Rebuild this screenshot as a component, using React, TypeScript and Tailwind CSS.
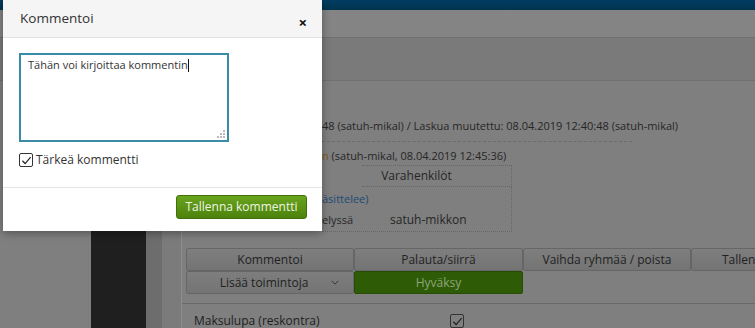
import React from 'react';

const FONT = { fontFamily: '"Open Sans", "Noto Sans", Arial, sans-serif' };

function Check({ className = '' }: { className?: string }) {
  return (
    <span className={`flex items-center justify-center border border-[#333] rounded-[2px] ${className}`}>
      <svg viewBox="0 0 12 12" className="w-[11px] h-[11px]">
        <path d="M1.5 6.3 L4.5 9.3 L10.5 2.2" fill="none" stroke="#222" strokeWidth="1.3" />
      </svg>
    </span>
  );
}

function Modal() {
  return (
    <div className="absolute left-[3px] top-0 w-[319px] h-[231px] bg-white shadow-[0_2px_8px_rgba(0,0,0,0.35)] flex flex-col">
      <div className="h-[38px] bg-[#f5f5f5] border-b border-[#e2e2e2] flex items-center justify-between pl-[17px] pr-[15px]">
        <span className="text-[13.5px] text-[#333] pb-[1px]">Kommentoi</span>
        <span className="text-[15px] font-bold text-[#111] leading-none pt-[7px]">×</span>
      </div>
      <div className="px-[16px] pt-[15px] pb-[18px] border-b border-[#e4e4e4]">
        <div className="relative w-[210px] h-[89px] border-2 border-[#3a8ca6] px-[7px] pt-[2px] text-[11px] text-[#333]">
          <span>Tähän voi kirjoittaa kommentin</span>
          <span className="inline-block w-[1px] h-[13px] bg-[#111] align-middle -mt-[2px]" />
          <svg viewBox="0 0 8 8" className="absolute right-[2px] bottom-[2px] w-[8px] h-[8px]">
            <rect x="6" y="0" width="2" height="2" fill="#bbb" />
            <rect x="3" y="3" width="2" height="2" fill="#bbb" />
            <rect x="6" y="3" width="2" height="2" fill="#bbb" />
            <rect x="0" y="6" width="2" height="2" fill="#bbb" />
            <rect x="3" y="6" width="2" height="2" fill="#bbb" />
            <rect x="6" y="6" width="2" height="2" fill="#bbb" />
          </svg>
        </div>
        <label className="mt-[9px] flex items-center gap-[3px] text-[12px] text-[#333]">
          <Check className="w-[14px] h-[14px] bg-white" />
          <span>Tärkeä kommentti</span>
        </label>
      </div>
      <div className="flex justify-end pr-[15px] pt-[7px]">
        <button className="w-[131px] h-[24px] rounded-[3px] border border-[#41700a] bg-gradient-to-b from-[#69a41d] to-[#4d820d] text-[12px] text-[#eef5e2]">
          Tallenna kommentti
        </button>
      </div>
    </div>
  );
}

function Btn({ children, w, green = false }: { children: React.ReactNode; w: string; green?: boolean }) {
  return (
    <div
      className={`${w} h-[23px] flex items-center justify-center rounded-[2px] border text-[12px] ${
        green
          ? 'bg-[#2e5b05] border-[#274d04] text-[#8fa67c]'
          : 'bg-gradient-to-b from-[#7e7e7e] to-[#747474] border-[#666] text-[#222]'
      }`}
    >
      {children}
    </div>
  );
}

export default function App() {
  return (
    <div className="relative w-[755px] h-[328px] overflow-hidden bg-[#7f7f7f]" style={FONT}>
      <div className="h-[10px] bg-gradient-to-b from-[#023c62] to-[#01344f]" />
      <div className="h-[28px] bg-[#848484] border-b border-[#6f6f6f]" />
      <div className="h-[43px] bg-[#7a7a7a] border-b border-[#6f6f6f]" />
      <div className="flex h-[247px]">
        <div className="w-[91px] shrink-0" />
        <div className="w-[55px] shrink-0 bg-[#1f1f1f]" />
        <div className="w-[16px] shrink-0 bg-[#6d6d6d]" />
        <div className="w-[19px] shrink-0 bg-[#7b7b7b]" />
        <div className="flex-1 border-l border-[#8e8e8e] text-[#262626]">
          <div className="pl-[140px] pt-[37px] text-[11px]">
            <div className="w-[310px] pb-[6px] border-b border-dashed border-[#6c6c6c] whitespace-nowrap">
              48 (satuh-mikal) / Laskua muutettu: 08.04.2019 12:40:48 (satuh-mikal)
            </div>
            <div className="pt-[6px] whitespace-nowrap">
              <span className="text-[#7a5a2a]">n</span> (satuh-mikal, 08.04.2019 12:45:36)
            </div>
          </div>
          <div className="ml-[140px] w-[190px] mt-[1px]">
            <div className="ml-[40px] h-[22px] border-t border-r border-b border-dotted border-[#666] flex items-center justify-center text-[12px] pr-[40px]">
              Varahenkilöt
            </div>
            <div className="h-[45px] border-r border-b border-dotted border-[#666] text-[11px] flex flex-col">
              <div className="h-[24px] flex items-center text-[#1d4a73]">äsittelee)</div>
              <div className="flex items-center">
                <span className="w-[68px]">elyssä</span>
                <span className="text-[12px]">satuh-mikkon</span>
              </div>
            </div>
          </div>
          <div className="pl-[4px] pt-[16px]">
            <div className="flex">
              <Btn w="w-[168px]">Kommentoi</Btn>
              <Btn w="w-[169px]">Palauta/siirrä</Btn>
              <Btn w="w-[168px]">Vaihda ryhmää / poista</Btn>
              <Btn w="w-[100px]">
                <span className="pl-[30px] w-full whitespace-nowrap">Tallenna</span>
              </Btn>
            </div>
            <div className="flex">
              <Btn w="w-[168px]">
                <span className="flex-1 text-center pl-[10px]">Lisää toimintoja</span>
                <svg viewBox="0 0 10 6" className="w-[8px] h-[5px] mr-[14px]">
                  <path d="M1 1 L5 5 L9 1" fill="none" stroke="#333" strokeWidth="1.2" />
                </svg>
              </Btn>
              <Btn w="w-[169px]" green>
                Hyväksy
              </Btn>
            </div>
          </div>
          <div className="mt-[9px] border-t border-[#6a6a6a] pl-[12px] pt-[8px] flex items-center text-[12px] text-[#1e1e1e]">
            <span className="w-[256px]">Maksulupa (reskontra)</span>
            <Check className="w-[14px] h-[14px]" />
          </div>
        </div>
      </div>
      <Modal />
    </div>
  );
}
